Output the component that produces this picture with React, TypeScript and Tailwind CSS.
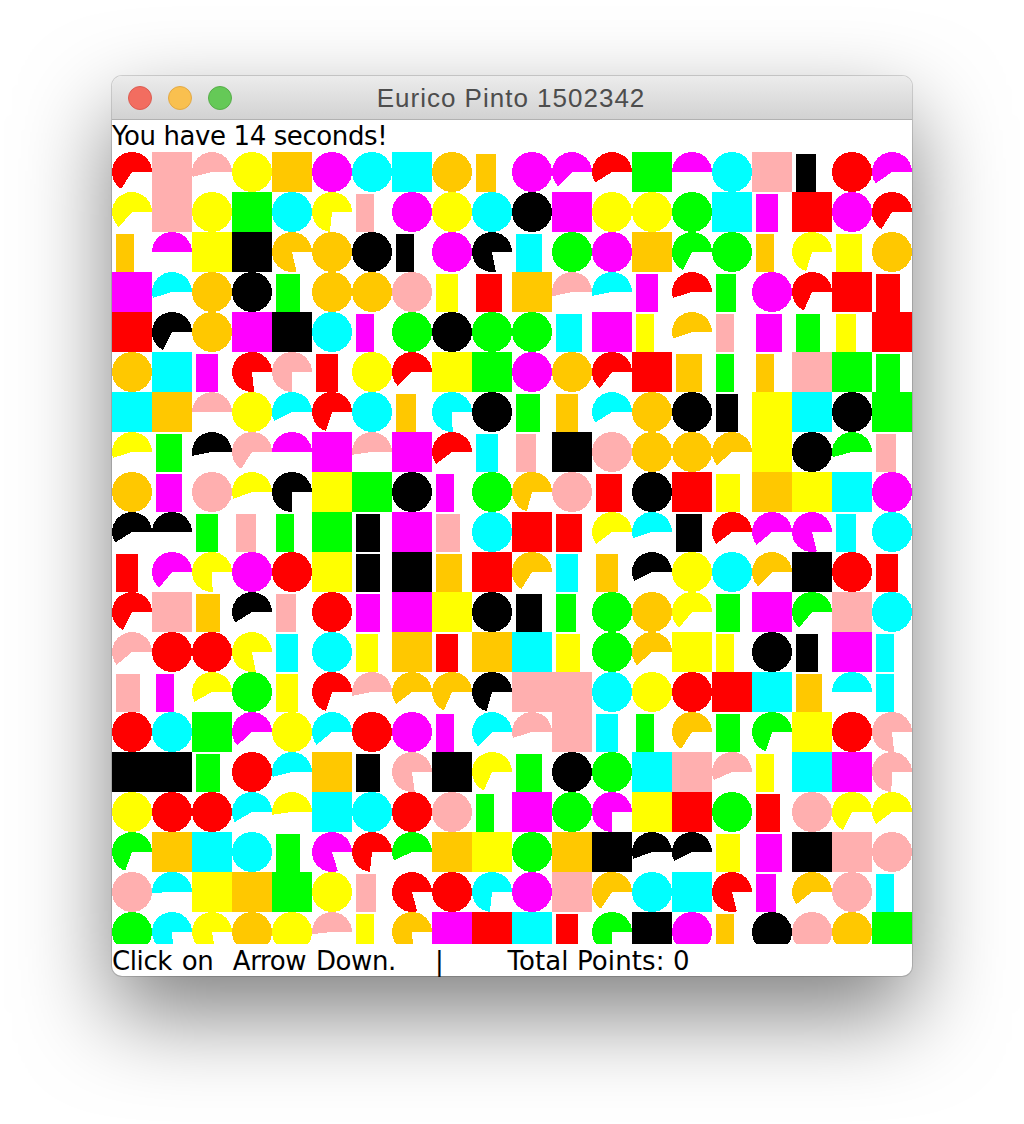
const rows = [
  'R237 Ps P194 Yc Os Mc Cc Cs Oc Ob20 Mc M227 R212 Gs M180 Cc Ps Kb20 Rc M215',
  'Y229 Ps Yc Gs Cc Y264 Pb18 Mc Yc Cc Kc Ms Yc Yc Gc Cs Mb22 Rs Mc R238',
  'Ob18 M180 Ys Ks O283 Oc Kc Kb18 Mc K281 Cb26 Gc Mc Os G244 Gc Ob18 Y253 Yb26 Oc',
  'Ms C197 Oc Kc Gb24 Oc Oc Pc Yb22 Rb26 Os P192 C191 Mb22 R197 Gb20 Mc R246 Rs Rb24',
  'Rs K243 Oc Ms Ks Cc Mb18 Gc Kc Gc Gc Cb26 Ms Yb18 O199 Pb18 Mb26 Gb24 Yb20 Rs',
  'Oc Cs Mb22 R276 P270 Rb22 Yc R224 Ys Gs Mc Oc R233 Rs Ob26 Gb18 Ob18 Ps Gs Gb24',
  'Cs Os P181 Yc C206 R252 Cc Ob20 C272 Kc Gb24 Ob22 C212 Oc Kc Kb22 Ys Cs Kc Gs',
  'Y197 Gb26 K191 P237 M180 Ms P188 Ms R217 Cb22 Pb20 Ks Pc Oc Oc O221 Ys Kc G195 Pb20',
  'Oc Mb26 Pc Y200 K270 Ys Gs Kc Mb18 Gc O255 Pc Rb26 Kc Rs Yb24 Os Ys Cs Mc',
  'K212 K180 Gb22 Pb20 Gb18 Gs Kb24 Ms Pb24 Cc Rs Rb26 Y217 C198 Kb26 R217 M220 M284 Cb20 Cc',
  'Rb22 M231 Y272 Mc Rc Ys Kb24 Ks Ob26 Rs O238 Cb22 Ob22 K207 Yc Cc O226 Ks Rc Rb22',
  'R244 Ps Ob24 K212 Pb20 Rc Mb24 Ms Ys Kc Kb26 Gb20 Gc Oc Y231 Gb24 Ms G231 Ps Cc',
  'P220 Rc Rc Y281 Cb22 Cc Yb22 Os Rb22 Os Cs Yb24 Gc O221 Ys Yb18 Kc Kb22 Ms Cb18',
  'Pb24 Mb18 Y209 Gc Yb22 R252 P191 O217 O246 K254 Ps Ps Cc Yc Rc Rs Cs Ob26 C180 Cb18',
  'Rc Cc Gs M222 Yc C220 Rc Mc Mb18 C226 P197 Ps Cb22 Gb18 O237 Gb24 G252 Ys Rc P276',
  'Ks Ks Gb24 Rc C194 Os Kb24 P278 Ks Y246 Gb26 Kc Gc Cs Ps P204 Yb18 Cs Ms P268',
  'Yc Rc Rc C210 Y188 Cs Cc Rc Pc Gb18 Ms Gc M270 Ys Rs Gc Rb24 Pc Y243 Y217',
  'G250 Os Cs Cc Gb24 M287 R264 G205 Os Ys Gc Os Ks K200 K206 Yb24 Mb26 Ks Ps Pc',
  'Pc C183 Ys Os Gs Yc Pb20 R285 Rc C264 Mc Ps O236 Cc Cs R284 Mb20 O218 Pc Cb18',
  'Gc C274 Y280 Oc Yc P186 Yb18 O274 Ms Rs Cs Rb22 G270 Ks Mc Ob18 Kc Pc Oc Gs',
]

const bgs: Record<string, string> = {
  R: 'bg-[#ff0000]',
  G: 'bg-[#00ff00]',
  C: 'bg-[#00ffff]',
  Y: 'bg-[#ffff00]',
  O: 'bg-[#ffc800]',
  M: 'bg-[#ff00ff]',
  K: 'bg-[#000000]',
  P: 'bg-[#ffafaf]',
}

const fills: Record<string, string> = {
  R: 'fill-[#ff0000]',
  G: 'fill-[#00ff00]',
  C: 'fill-[#00ffff]',
  Y: 'fill-[#ffff00]',
  O: 'fill-[#ffc800]',
  M: 'fill-[#ff00ff]',
  K: 'fill-[#000000]',
  P: 'fill-[#ffafaf]',
}

const barWidths: Record<string, string> = {
  '18': 'w-[18px]',
  '20': 'w-[20px]',
  '22': 'w-[22px]',
  '24': 'w-[24px]',
  '26': 'w-[26px]',
}

function piePath(deg: number) {
  const rad = (deg * Math.PI) / 180
  const x = 20 + 20 * Math.cos(rad)
  const y = 20 - 20 * Math.sin(rad)
  return `M20 20 L40 20 A20 20 0 ${deg > 180 ? 1 : 0} 0 ${x.toFixed(2)} ${y.toFixed(2)} Z`
}

function Shape({ token }: { token: string }) {
  const color = token[0]
  const rest = token.slice(1)

  if (rest === 's') return <div className={`h-10 w-10 ${bgs[color]}`} />

  if (rest[0] === 'b') {
    return (
      <div className="flex h-10 w-10 items-end pl-1">
        <div className={`h-[38px] ${barWidths[rest.slice(1)]} ${bgs[color]}`} />
      </div>
    )
  }

  return (
    <svg width="40" height="40" viewBox="0 0 40 40" shapeRendering="crispEdges" className="block">
      {rest === 'c' ? (
        <circle cx="20" cy="20" r="20" className={fills[color]} />
      ) : (
        <path d={piePath(Number(rest))} className={fills[color]} />
      )}
    </svg>
  )
}

export default function App() {
  return (
    <div className="h-[1124px] overflow-hidden bg-white pl-[112px] pt-[76px]">
      <div className="w-[800px] rounded-[10px] bg-white shadow-[0_0_0_1px_rgba(0,0,0,0.15),0_38px_90px_rgba(0,0,0,0.5)]">
        <div className="relative flex h-11 items-center justify-center rounded-t-[10px] border-b border-[#b1b1b1] bg-gradient-to-b from-[#ececec] to-[#d2d2d2]">
          <div className="absolute left-4 top-[10px] flex gap-4">
            <span className="h-6 w-6 rounded-full border border-[#dc5d52] bg-[#f26d60]" />
            <span className="h-6 w-6 rounded-full border border-[#e3a945] bg-[#f9c04f]" />
            <span className="h-6 w-6 rounded-full border border-[#57ad4a] bg-[#65c957]" />
          </div>
          <span className="pr-[2px] font-['Liberation_Sans',sans-serif] text-[26px] leading-none tracking-[1px] text-[#4d4d4d]">
            Eurico Pinto 1502342
          </span>
        </div>
        <div className="h-8 font-['DejaVu_Sans',sans-serif] text-[26px] leading-[33px] tracking-[-0.4px] text-black">
          You have 14 seconds!
        </div>
        <div className="grid h-[792px] grid-cols-[repeat(20,40px)] auto-rows-[40px] overflow-hidden">
          {rows.flatMap((row, r) =>
            row.split(' ').map((token, c) => <Shape key={`${r}-${c}`} token={token} />)
          )}
        </div>
        <div className="h-8 whitespace-pre font-['DejaVu_Sans',sans-serif] text-[26px] leading-[35px] tracking-[-0.4px] [word-spacing:1.9px] text-black">
          {'Click on  Arrow Down.    |'}
          <span className="[word-spacing:1.3px]">{'       '}</span>
          <span className="tracking-[0.1px] [word-spacing:0px]">Total Points: 0</span>
        </div>
      </div>
    </div>
  )
}
